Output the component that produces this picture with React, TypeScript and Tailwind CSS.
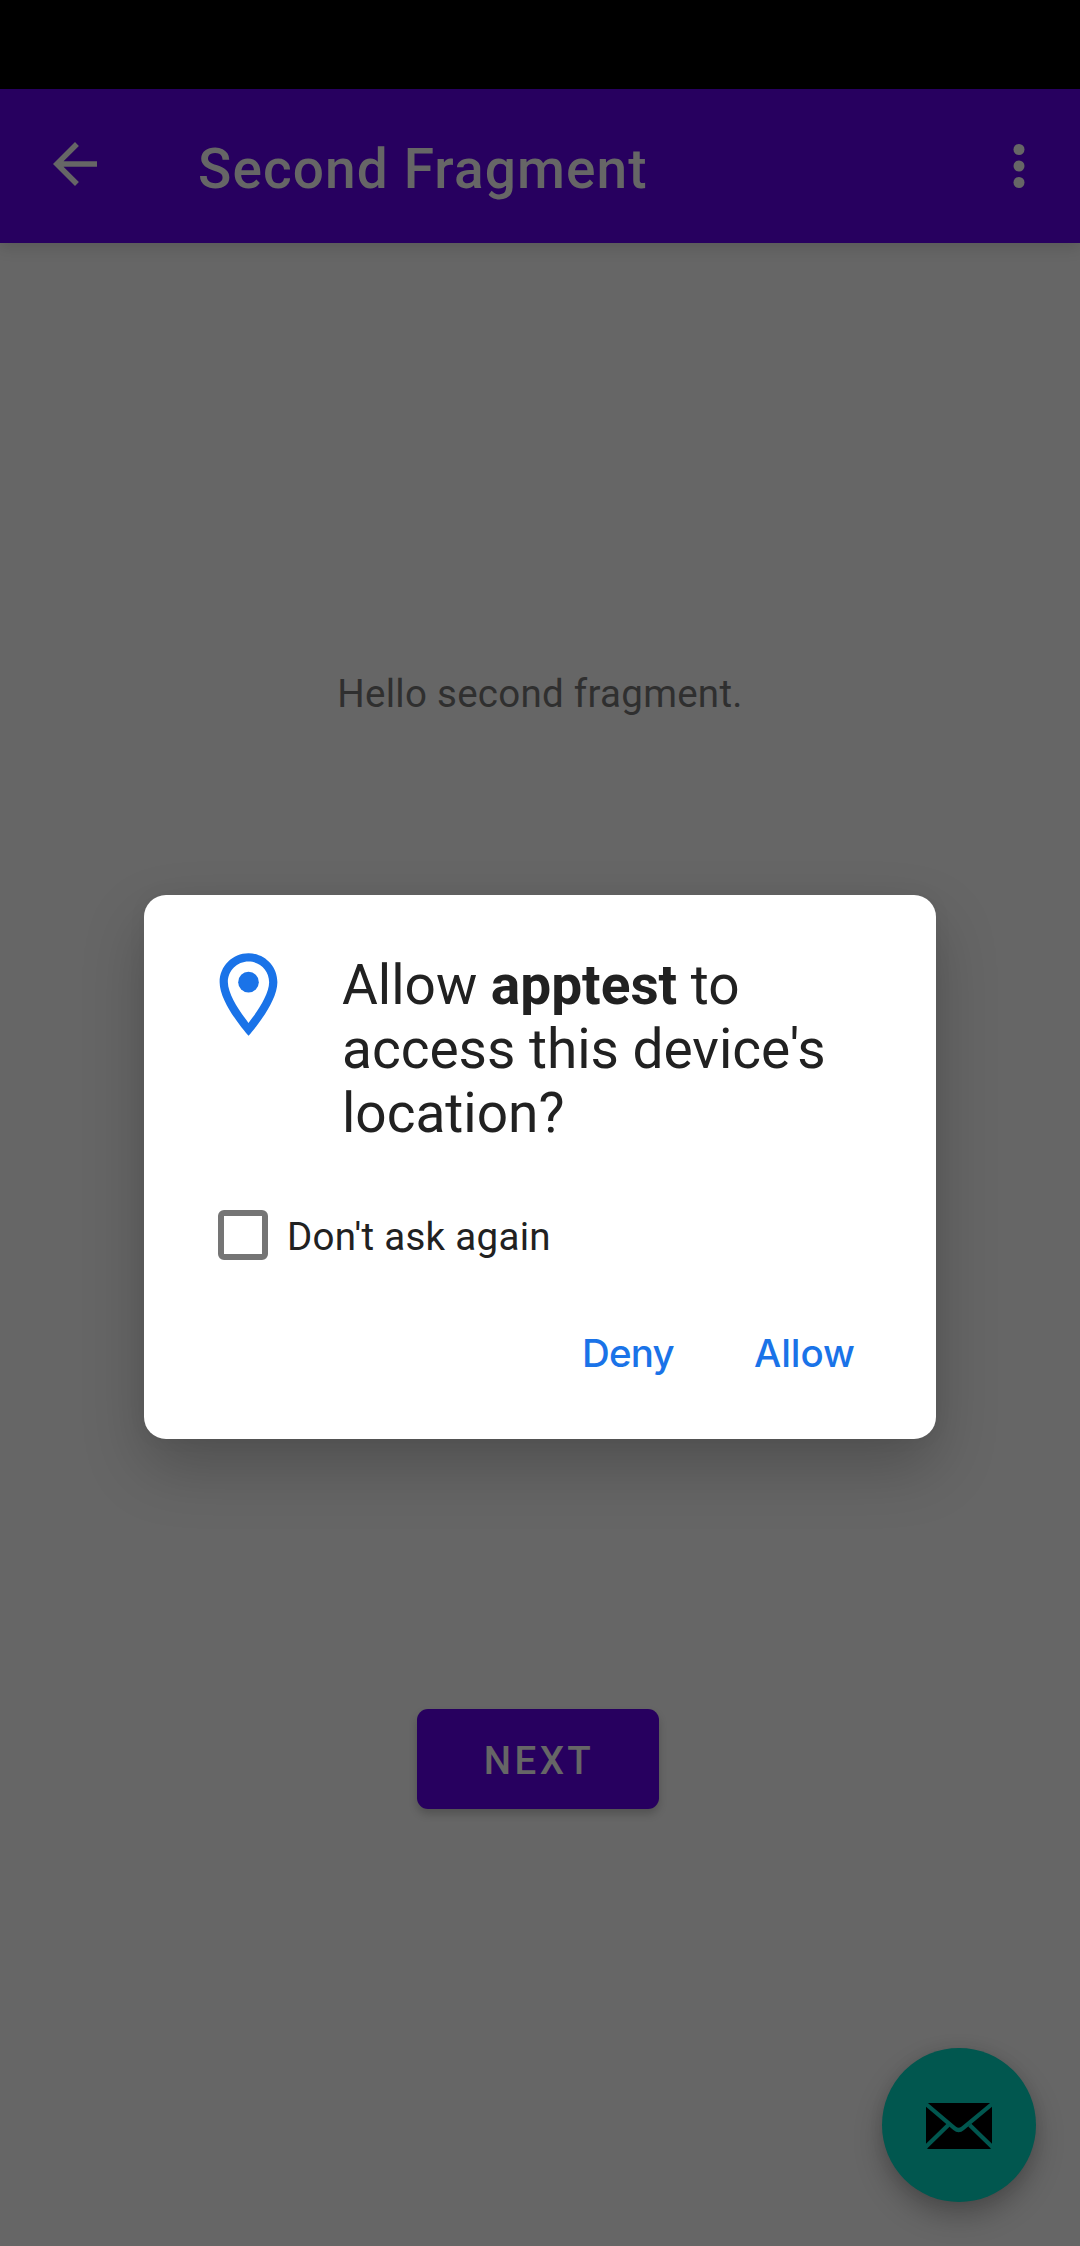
import React from "react";

function AppBar() {
  return (
    <header className="relative z-10 flex h-[154px] items-center bg-[#27005f] text-[#666666] shadow-[0_5px_14px_rgba(0,0,0,0.13)]">
      <button className="ml-[42px] size-[66px]" aria-label="Navigate up">
        <svg viewBox="0 0 24 24" className="-mt-[4px] size-[66px]" fill="currentColor">
          <path d="M20 11H7.83l5.59-5.59L12 4l-8 8 8 8 1.41-1.41L7.83 13H20v-2z" />
        </svg>
      </button>
      <h1 className="ml-[90px] pt-[5px] text-[55px] leading-[64px] font-medium tracking-[1.1px]">Second Fragment</h1>
      <button className="mr-[28px] ml-auto size-[66px]" aria-label="More options">
        <svg viewBox="0 0 24 24" className="size-[66px]" fill="currentColor">
          <circle cx="12" cy="6" r="2" />
          <circle cx="12" cy="12" r="2" />
          <circle cx="12" cy="18" r="2" />
        </svg>
      </button>
    </header>
  );
}

function PermissionDialog() {
  return (
    <section
      role="dialog"
      className="absolute top-[895px] left-[144px] flex h-[544px] w-[792px] flex-col rounded-[22px] bg-white text-[#212121] shadow-[0_28px_62px_rgba(0,0,0,0.22),0_0_20px_rgba(0,0,0,0.04)]"
    >
      <div className="flex pt-[50px] pl-[55px]">
        <svg viewBox="0 0 24 24" className="size-[99px] shrink-0 text-[#1a73e8]" fill="currentColor">
          <path d="M12 2C8.13 2 5 5.13 5 9c0 5.25 7 13 7 13s7-7.75 7-13c0-3.87-3.13-7-7-7zM7 9c0-2.76 2.24-5 5-5s5 2.24 5 5c0 2.88-2.88 7.19-5 9.88C9.92 16.21 7 11.85 7 9z" />
          <circle cx="12" cy="9" r="2.5" />
        </svg>
        <h2 className="ml-[44px] pt-[8px] text-[55px] leading-[64px] tracking-[-0.02px]">
          Allow <b className="font-bold">apptest</b> to
          <br />
          access this device's
          <br />
          location?
        </h2>
      </div>
      <label className="mt-[65px] ml-[74px] flex h-[50px] items-center">
        <span className="size-[50px] rounded-[6px] border-[6px] border-[#757575]" />
        <span className="ml-[19px] pt-[3px] text-[38.5px] leading-[46px] tracking-[0.3px]">Don't ask again</span>
      </label>
      <div className="mt-[70px] flex font-['Inter','Roboto',sans-serif] text-[38.5px] leading-[46px] font-medium text-[#1a73e8]">
        <button className="ml-[438px] w-[172px] text-left tracking-[-0.8px]">Deny</button>
        <button className="tracking-[-0.1px]">Allow</button>
      </div>
    </section>
  );
}

function MailButton() {
  return (
    <button
      aria-label="Email"
      className="absolute right-[44px] bottom-[44px] flex size-[154px] items-center justify-center rounded-full bg-[#01574f] shadow-[0_14px_28px_rgba(0,0,0,0.26),0_0_14px_rgba(0,0,0,0.08)]"
    >
      <svg viewBox="0 0 198 138" className="mt-[1.5px] h-[46px] w-[66px]">
        <rect width="198" height="138" rx="8" fill="#000" />
        <g fill="none" stroke="#01574f" strokeWidth="12.5">
          <path d="M-4 0L86 76Q98 86 110 76L202 0" />
          <path d="M-4 135L67 66M202 135L131 66" />
        </g>
      </svg>
    </button>
  );
}

export default function App() {
  return (
    <div className="relative flex h-[2246px] w-[1080px] flex-col overflow-hidden bg-[#666666] font-['Roboto',sans-serif]">
      <div className="h-[89px] bg-black" />
      <AppBar />
      <main className="flex flex-1 flex-col items-center">
        <p className="mt-[428px] text-[38.5px] leading-[46px] tracking-[0.27px] text-[#2f2f2f]">Hello second fragment.</p>
        <button className="mt-[992px] mr-[4px] h-[100px] w-[242px] rounded-[11px] bg-[#27005f] pt-[3px] pl-[2px] text-[38.5px] font-medium tracking-[3.4px] text-[#666666] shadow-[0_5px_8px_rgba(0,0,0,0.2)]">
          NEXT
        </button>
      </main>
      <PermissionDialog />
      <MailButton />
    </div>
  );
}
